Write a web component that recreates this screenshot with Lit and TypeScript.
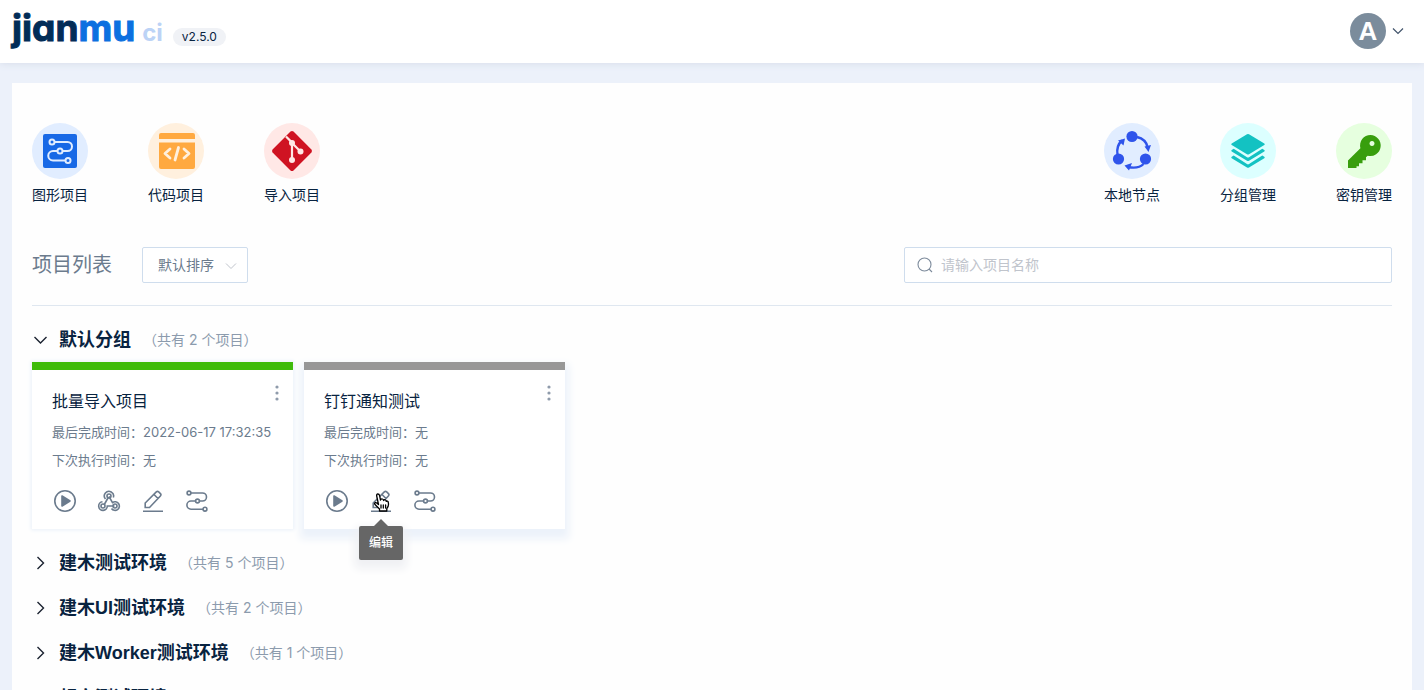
import { LitElement, html, css, svg, nothing } from "lit";
import { customElement, property, state } from "lit/decorators.js";

const entryIcons: Record<string, unknown> = {
  flow: svg`<rect x="11" y="11" width="34" height="34" rx="2" fill="#1869e6"/>
    <g fill="none" stroke="#e1edff" stroke-width="2"><path d="M22 19H35.500a4.500 4.500 0 0 1 0 9H21a4.750 4.750 0 0 0 0 9.500H33"/></g>
    <g fill="#1869e6" stroke="#e1edff" stroke-width="2"><circle cx="20" cy="19" r="2.500"/><circle cx="28" cy="28" r="2.500"/><circle cx="36" cy="37.500" r="2.500"/></g>`,
  code: svg`<path d="M11 16v-4q0-2 2-2h32q2 0 2 2v4zM11 19.500h36v24.500q0 2-2 2H13q-2 0-2-2z" fill="#ffa940"/>
    <path d="M22 26l-5 4.500 5 4.500M36 26l5 4.500-5 4.500M30.500 24.500l-3.500 12.500" fill="none" stroke="#fff0de" stroke-width="2.800" stroke-linecap="round" stroke-linejoin="round"/>`,
  git: svg`<path d="M26.500 8.600q1.500-1.200 3 0L47.400 26.500q1.200 1.500 0 3L29.500 47.400q-1.500 1.200-3 0L8.600 29.500q-1.200-1.500 0-3z" fill="#cf1322"/>
    <path d="M22 13.500l6 6V37M28 20l8 8" fill="none" stroke="#ffe8e6" stroke-width="2.200"/>
    <g fill="#ffe8e6"><circle cx="28" cy="20" r="3"/><circle cx="28" cy="37" r="3"/><circle cx="36.500" cy="28.500" r="3"/></g>`,
  nodes: svg`<g fill="#2f54eb"><circle cx="28" cy="13.500" r="5.600"/><circle cx="14.500" cy="36" r="5.600"/><circle cx="41.500" cy="36" r="5.600"/>
    <path d="M14 17.500l7-2-1.500 7zM40.500 23.500l6.500-1.500-2.500 7zM28 40l-7.500 2.500 4.500 5z"/></g>
    <path d="M13.500 32C12.500 26 14 21 18 17.500M33 14C39 15.500 42.500 19 43.500 24M39.500 41C36 44.500 31 45.500 24 44" fill="none" stroke="#2f54eb" stroke-width="2.400"/>`,
  layers: svg`<g fill="#13c2c2"><path d="M27 11.300q1-.6 2 0L44.300 20.500q1 .7 0 1.400L29 31.200q-1 .6-2 0L11.700 21.900q-1-.7 0-1.400z"/>
    <path d="M11.700 27l2-1.200L27 34.300q1 .6 2 0L42.300 25.800l2 1.200q1 .7 0 1.400L29 37.700q-1 .6-2 0L11.700 28.400q-1-.7 0-1.400z"/>
    <path d="M11.700 33.800l2-1.200L27 41.100q1 .6 2 0l13.300-8.500 2 1.200q1 .7 0 1.400L29 44.500q-1 .6-2 0L11.700 35.200q-1-.7 0-1.400z"/></g>`,
  key: svg`<path d="M34.500 12a10.500 10.500 0 1 1-2.800 20.700L30 34.300v3h-3.500v3H23v3h-2.500V45H12v-7.500L24.400 25.200A10.500 10.500 0 0 1 34.500 12zM36 18a2.500 2.500 0 1 0 .010 0z" fill="#389e0d" fill-rule="evenodd"/>`,
};

const actionIcons: Record<string, unknown> = {
  run: svg`<circle cx="11" cy="11" r="10.200"/><path d="M8 6v10l8-5z" fill="currentColor" stroke-linejoin="round"/>`,
  hook: svg`<circle cx="11" cy="6" r="2"/><circle cx="5" cy="16" r="2"/><circle cx="17" cy="16" r="2"/>
    <path d="M7.500 9A4.600 4.600 0 1 1 15.300 7.500M11 6.500L14.500 12.600A4.300 4.300 0 1 1 13.500 18.500M10.500 7L6 15M4.500 11.800A4.300 4.300 0 1 0 9.300 16H16.500"/>`,
  edit: svg`<path d="M1 21.200H21M3.200 17.500V13L14.300 1.900q1.200-1.100 2.400 0l1.700 1.700q1.100 1.200 0 2.400L7.500 17.500zM12 4.500l4 4"/>`,
  flow: svg`<path d="M5 3h11.500a4 4 0 0 1 0 8H5a4 4 0 0 0 0 8.200H17"/>
    <g fill="#fff"><circle cx="3" cy="3" r="1.900"/><circle cx="11.500" cy="11" r="1.900"/><circle cx="19" cy="19.200" r="1.900"/></g>`,
};

const labels: Record<string, string> = {
  run: "触发",
  hook: "Webhook",
  edit: "编辑",
  flow: "流程",
};

// Full-width punctuation used in labels.
const COLON = "\uFF1A";
const OPEN = "\uFF08";
const CLOSE = "\uFF09";

interface Project {
  name: string;
  last: string;
  next: string;
  status: "success" | "idle";
  actions: string[];
  active?: string;
}

interface Group {
  name: string;
  count: number;
  open: boolean;
  projects: Project[];
}

const fontStack = css`"Liberation Sans", "Noto Sans CJK SC", sans-serif`;
const numberStack = css`Inter, "Noto Sans CJK SC", sans-serif`;

@customElement("entry-link")
export class EntryLink extends LitElement {
  @property() icon = "flow";
  @property() label = "";
  @property() tint = "#e1edff";

  static styles = css`
    :host { display: block; }
    .entry {
      display: flex;
      flex-direction: column;
      align-items: center;
      gap: 6px;
      font-size: 14px;
      line-height: 20px;
      color: #082340;
      text-decoration: none;
      white-space: nowrap;
    }
    .entry svg { display: block; }
  `;

  render() {
    return html`<a class="entry" href="#">
      <svg width="56" height="56" viewBox="0 0 56 56" aria-hidden="true">
        <circle cx="28" cy="28" r="28" fill=${this.tint} />
        ${entryIcons[this.icon]}
      </svg>
      <span>${this.label}</span>
    </a>`;
  }
}

@customElement("project-card")
export class ProjectCard extends LitElement {
  @property({ attribute: false }) project!: Project;

  static styles = css`
    :host { display: block; }
    .card {
      position: relative;
      border-top: 8px solid #979797;
      background: #fff;
      padding: 21px 20px 17px;
      box-shadow: 0 0 4px 1px #e9f0f9;
      color: #6b7b8d;
      font-size: 13px;
      line-height: 20px;
    }
    .card.success { border-color: #3ebb0a; }
    .card.hovered { box-shadow: 0 6px 8px 4px #ecf2fa; }
    .name {
      margin: 0 0 9px;
      font-size: 16px;
      line-height: 22px;
      font-weight: 400;
      color: #082340;
    }
    .row { margin: 0 0 8px; font-family: ${numberStack}; white-space: nowrap; }
    .actions { display: flex; gap: 18px; margin-top: 20px; }
    button {
      border: 0;
      padding: 0;
      background: none;
      color: inherit;
      cursor: pointer;
    }
    .action { position: relative; width: 26px; height: 22px; }
    .action svg { display: block; margin: 0 auto; }
    .more { position: absolute; top: 12px; right: 8px; width: 16px; height: 22px; }
    .more svg { display: block; margin: 0 auto; }
    .tip {
      position: absolute;
      z-index: 2;
      top: 36px;
      left: 50%;
      transform: translateX(-50%);
      padding: 7px 10px;
      border-radius: 2px;
      background: #666;
      color: #fff;
      font-family: ${fontStack};
      font-size: 12px;
      line-height: 20px;
      font-weight: 500;
      white-space: nowrap;
      box-shadow: 0 5px 8px 4px #f0f1f4;
    }
    .tip::before {
      content: "";
      position: absolute;
      bottom: 100%;
      left: 50%;
      transform: translateX(-50%);
      border: 7px solid transparent;
      border-top: 0;
      border-bottom-color: #666;
    }
    .action .pointer { position: absolute; z-index: 3; top: 3px; left: 5px; }
  `;

  render() {
    const p = this.project;
    return html`<article class="card ${p.status} ${p.active ? "hovered" : ""}">
      <h3 class="name">${p.name}</h3>
      <p class="row">最后完成时间${COLON}${p.last}</p>
      <p class="row">下次执行时间${COLON}${p.next}</p>
      <div class="actions">
        ${p.actions.map(
          (a) => html`<button class="action" aria-label=${labels[a]}>
            <svg width="22" height="22" viewBox="0 0 22 22" fill="none" stroke="currentColor" stroke-width="1.6" overflow="visible">
              ${actionIcons[a]}
            </svg>
            ${p.active === a
              ? html`<span class="tip" role="tooltip">${labels[a]}</span>
                  <svg class="pointer" width="17" height="19" viewBox="0 0 17 19" fill="#fff" stroke="#000" stroke-width="1.3" stroke-linejoin="round" stroke-linecap="round">
                    <path d="M5.500 11.500L3.700 3Q3.400 1 4.800 1T6.600 2.600L7.500 7Q8 5.600 9.400 6T10.500 7.500Q11.300 6.300 12.400 7T13.200 8.400Q14.300 7.500 15.100 8.700C15.800 11 15.200 14 13.800 15.500V18H6.500V16L2 11.500Q1 10 2.300 9.600T5.500 11.500z" />
                    <path d="M8 12v3M10.300 12v3M12.600 12v3" />
                  </svg>`
              : nothing}
          </button>`
        )}
      </div>
      <button class="more" aria-label="更多">
        <svg width="4" height="18" viewBox="0 0 4 18" fill="#8f9bab">
          <circle cx="2" cy="3" r="1.600" /><circle cx="2" cy="9" r="1.600" /><circle cx="2" cy="15" r="1.600" />
        </svg>
      </button>
    </article>`;
  }
}

@customElement("app-root")
export class AppRoot extends LitElement {
  @state() private groups: Group[] = [
    {
      name: "默认分组",
      count: 2,
      open: true,
      projects: [
        { name: "批量导入项目", last: "2022-06-17 17:32:35", next: "无", status: "success", actions: ["run", "hook", "edit", "flow"] },
        { name: "钉钉通知测试", last: "无", next: "无", status: "idle", actions: ["run", "edit", "flow"], active: "edit" },
      ],
    },
    { name: "建木测试环境", count: 5, open: false, projects: [] },
    { name: "建木UI测试环境", count: 2, open: false, projects: [] },
    { name: "建木Worker测试环境", count: 1, open: false, projects: [] },
    { name: "超市测试环境", count: 3, open: false, projects: [] },
  ];

  static styles = css`
    :host {
      display: flex;
      flex-direction: column;
      height: 100vh;
      overflow: hidden;
      background: #ecf1fa;
      color: #082340;
      font-family: ${fontStack};
      font-size: 14px;
    }
    * { box-sizing: border-box; }
    .header {
      flex: none;
      display: flex;
      align-items: center;
      justify-content: space-between;
      height: 63px;
      padding: 0 20px 2px 12px;
      background: #fff;
      box-shadow: 0 0 8px #d3d9e6;
    }
    .brand { display: flex; align-items: baseline; color: #022c57; text-decoration: none; }
    .logo {
      font-family: Inter, sans-serif;
      font-feature-settings: "cv11", "ss03";
      font-size: 37px;
      line-height: 44px;
      font-weight: 700;
      -webkit-text-stroke: 1px currentColor;
    }
    .logo .mu { color: #0c70e0; }
    .logo .ci { margin-left: 7px; font-size: 24px; color: #bcd3f6; -webkit-text-stroke: 0; }
    .version {
      margin-left: 10px;
      padding: 0 9px;
      border-radius: 9px;
      background: #f0f2f6;
      color: #082340;
      font-family: ${numberStack};
      font-size: 12px;
      line-height: 18px;
    }
    button { border: 0; padding: 0; background: none; color: inherit; font: inherit; cursor: pointer; }
    .user { display: flex; align-items: center; gap: 6px; }
    .avatar {
      width: 36px;
      height: 36px;
      border-radius: 50%;
      background: #7b8c9c;
      color: #fff;
      font-size: 26px;
      line-height: 36px;
      font-weight: 700;
    }
    .panel { flex: 1; min-height: 0; margin: 20px 12px 0; padding: 40px 20px 0; background: #fefefe; overflow: hidden; }
    .entries { display: flex; justify-content: space-between; }
    .cluster { display: flex; gap: 60px; }
    .toolbar {
      display: flex;
      align-items: center;
      margin-top: 42px;
      padding-bottom: 22px;
      border-bottom: 1px solid #dfe7f0;
    }
    .title { margin: 0; font-size: 20px; line-height: 36px; font-weight: 400; color: #6b7b8d; }
    .sort { position: relative; margin-left: 30px; }
    .sort select {
      appearance: none;
      display: block;
      width: 106px;
      height: 36px;
      padding: 0 15px;
      border: 1px solid #cfdded;
      border-radius: 2px;
      background: #fff;
      color: #6b7b8d;
      font: inherit;
    }
    .sort svg { position: absolute; right: 11px; top: 15px; pointer-events: none; }
    .search {
      display: flex;
      align-items: center;
      gap: 8px;
      width: 488px;
      height: 36px;
      margin-left: auto;
      padding: 0 12px;
      border: 1px solid #cfdded;
      border-radius: 2px;
      background: #fff;
    }
    .search input { flex: 1; min-width: 0; border: 0; padding: 0; outline: 0; background: none; font: inherit; color: #082340; }
    .search input::placeholder { color: #c0c4cc; opacity: 1; }
    .groups { padding-top: 2px; }
    .group { padding-top: 19px; }
    .toggle { display: flex; align-items: center; height: 26px; white-space: nowrap; }
    .toggle svg { margin-right: 10px; }
    .group-name { margin: 0; font-size: 18px; line-height: 26px; font-weight: 700; }
    .count { margin-left: 12px; font-family: ${numberStack}; line-height: 26px; color: #8c9bad; }
    .cards { display: grid; grid-template-columns: repeat(auto-fill, 261px); gap: 11px; margin: 9px 0 2px; }
  `;

  private toggle(group: Group) {
    this.groups = this.groups.map((g) => (g === group ? { ...g, open: !g.open } : g));
  }

  private renderGroup(group: Group) {
    return html`<section class="group">
      <button class="toggle" aria-expanded=${group.open} @click=${() => this.toggle(group)}>
        <svg width="17" height="16" viewBox="0 0 17 16" fill="none" stroke="#1b2330" stroke-width="1.4">
          <path d=${group.open ? "M2.500 5l6 6 6-6" : "M5.500 2l6 6-6 6"} />
        </svg>
        <h2 class="group-name">${group.name}</h2>
        <span class="count">${OPEN}共有 ${group.count} 个项目${CLOSE}</span>
      </button>
      ${group.open
        ? html`<div class="cards">
            ${group.projects.map((p) => html`<project-card .project=${p}></project-card>`)}
          </div>`
        : nothing}
    </section>`;
  }

  render() {
    return html`
      <header class="header">
        <a class="brand" href="#">
          <span class="logo">jian<span class="mu">mu</span><span class="ci">ci</span></span>
          <span class="version">v2.5.0</span>
        </a>
        <button class="user" aria-label="用户菜单">
          <span class="avatar">A</span>
          <svg width="12" height="8" viewBox="0 0 12 8" fill="none" stroke="#42546b" stroke-width="1.2"><path d="M1 1.500l5 5 5-5" /></svg>
        </button>
      </header>
      <main class="panel">
        <nav class="entries">
          <div class="cluster">
            <entry-link icon="flow" label="图形项目" tint="#e1edff"></entry-link>
            <entry-link icon="code" label="代码项目" tint="#fff0de"></entry-link>
            <entry-link icon="git" label="导入项目" tint="#ffe8e6"></entry-link>
          </div>
          <div class="cluster">
            <entry-link icon="nodes" label="本地节点" tint="#e1edff"></entry-link>
            <entry-link icon="layers" label="分组管理" tint="#dcffff"></entry-link>
            <entry-link icon="key" label="密钥管理" tint="#e6ffdf"></entry-link>
          </div>
        </nav>
        <div class="toolbar">
          <h1 class="title">项目列表</h1>
          <div class="sort">
            <select aria-label="排序方式"><option>默认排序</option></select>
            <svg width="12" height="8" viewBox="0 0 12 8" fill="none" stroke="#c0c4cc"><path d="M1 1.500l5 5 5-5" /></svg>
          </div>
          <label class="search">
            <svg width="16" height="16" viewBox="0 0 16 16" fill="none" stroke="#7d8b9c" stroke-width="1.1"><circle cx="7.500" cy="7.500" r="6.500" /><path d="M12 12l3 3" /></svg>
            <input type="text" aria-label="项目名称" placeholder="请输入项目名称" />
          </label>
        </div>
        <div class="groups">${this.groups.map((g) => this.renderGroup(g))}</div>
      </main>
    `;
  }
}
